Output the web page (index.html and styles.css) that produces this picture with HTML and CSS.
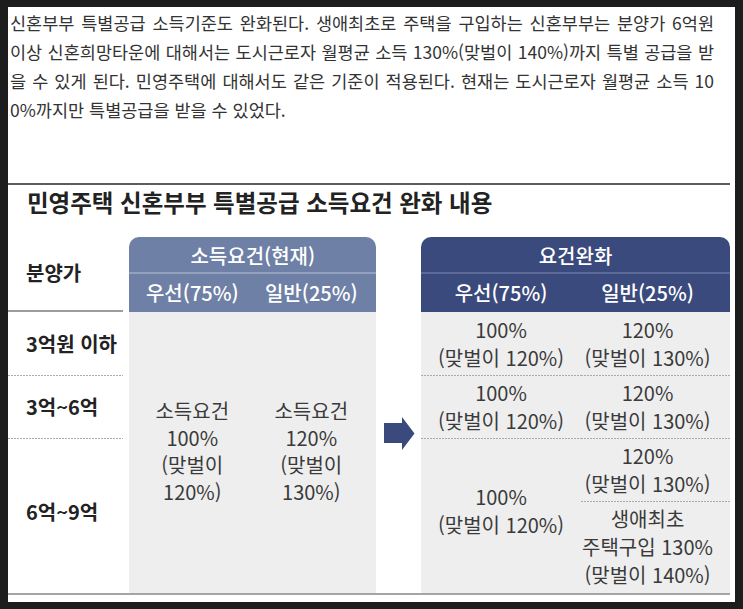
FILE: index.html
```html
<!DOCTYPE html>
<html lang="ko">
<head>
<meta charset="utf-8">
<title>신혼부부 특별공급 소득요건 완화</title>
<link rel="stylesheet" href="styles.css">
</head>
<body>
<div class="page">
  <div class="para">
    <div class="ln">신혼부부 특별공급 소득기준도 완화된다. 생애최초로 주택을 구입하는 신혼부부는 분양가 6억원</div>
    <div class="ln">이상 신혼희망타운에 대해서는 도시근로자 월평균 소득 130%(맞벌이 140%)까지 특별 공급을 받</div>
    <div class="ln">을 수 있게 된다. 민영주택에 대해서도 같은 기준이 적용된다. 현재는 도시근로자 월평균 소득 10</div>
    <div class="ln last">0%까지만 특별공급을 받을 수 있었다.</div>
  </div>
  <section class="info">
    <h2 class="title">민영주택 신혼부부 특별공급 소득요건 완화 내용</h2>
    <div class="table">
      <div class="labels">
        <div class="lab-head">분양가</div>
        <div class="lab r1">3억원 이하</div>
        <div class="lab r2 dt">3억~6억</div>
        <div class="lab r3 dt">6억~9억</div>
      </div>
      <div class="cur">
        <div class="h1 cur-h1">소득요건(현재)</div>
        <div class="h2 cur-h2"><span class="c1">우선(75%)</span><span class="c2">일반(25%)</span></div>
        <div class="cur-body">
          <div class="c1">소득요건<br>100%<br>(맞벌이<br>120%)</div>
          <div class="c2">소득요건<br>120%<br>(맞벌이<br>130%)</div>
        </div>
      </div>
      <div class="arrow-col">
        <svg class="arrow" width="31" height="33" viewBox="0 0 31 33"><polygon points="0,6 18,6 18,0 30.5,16.5 18,33 18,26 0,26" fill="#3b4a7d"/></svg>
      </div>
      <div class="new">
        <div class="h1 new-h1">요건완화</div>
        <div class="h2 new-h2"><span class="c1">우선(75%)</span><span class="c2">일반(25%)</span></div>
        <div class="new-body">
          <div class="cell a1 c1">100%<br>(맞벌이 120%)</div>
          <div class="cell a2 c2">120%<br>(맞벌이 130%)</div>
          <div class="cell b1 c1 dt">100%<br>(맞벌이 120%)</div>
          <div class="cell b2 c2 dt">120%<br>(맞벌이 130%)</div>
          <div class="cell d1 c1 dt">100%<br>(맞벌이 120%)</div>
          <div class="cell d2 c2 dt">120%<br>(맞벌이 130%)</div>
          <div class="cell e2 c2 dt">생애최초<br>주택구입 130%<br>(맞벌이 140%)</div>
        </div>
      </div>
    </div>
  </section>
</div>
</body>
</html>
```
FILE: styles.css
```css
* { box-sizing: border-box; }
body {
  margin: 0;
  background: #1d1d1d;
}
.page {
  margin: 7px 0 0 8px;
  width: 727px;
  height: 595px;
  background: #fff;
  overflow: hidden;
  font-family: "Noto Sans CJK KR", "Noto Sans", sans-serif;
}
.para {
  margin: 1px 0 0 2px;
  width: 704px;
  font-size: 17.5px;
  line-height: 29px;
  color: #333;
}
.ln {
  text-align: justify;
  text-align-last: justify;
}
.ln.last {
  text-align: left;
  text-align-last: left;
}
.info {
  margin-top: 59px;
  width: 722px;
  border-top: 2px solid #5c5c5c;
  border-bottom: 2px solid #a5a5a5;
}
.title {
  margin: 3px 0 0 19px;
  height: 49px;
  font-size: 23.5px;
  line-height: 28px;
  font-weight: 700;
  color: #222;
}
.table {
  display: flex;
  height: 356px;
}
.labels {
  width: 116px;
  display: flex;
  flex-direction: column;
}
.lab-head, .lab {
  display: flex;
  align-items: center;
  padding-left: 18px;
  font-size: 20px;
  font-weight: 700;
  color: #222;
}
.lab-head {
  height: 75px;
  border-bottom: 2px solid #9c9c9c;
  padding-bottom: 2px;
}
.lab.r1, .lab.r2 { height: 63px; }
.lab.r3 { flex: 1; padding-bottom: 9px; }
.dt {
  background-image: linear-gradient(to right, #ababab 0, #ababab 2px, transparent 2px);
  background-size: 3px 1px;
  background-repeat: repeat-x;
  background-position: left top;
}
.h1 {
  height: 37px;
  border-radius: 10px 10px 0 0;
  display: flex;
  align-items: center;
  justify-content: center;
  color: #fff;
  font-size: 20px;
  font-weight: 500;
  padding-top: 2px;
}
.h2 {
  height: 38px;
  display: grid;
  align-items: center;
  color: #fff;
  font-size: 20px;
  font-weight: 500;
  text-align: center;
  padding-bottom: 2px;
}
.cur {
  width: 247px;
  margin-left: 6px;
  display: flex;
  flex-direction: column;
}
.cur-h1 {
  background: #6f80a6;
  border-bottom: 2px solid #93a1bf;
}
.cur-h2 {
  background: #6f80a6;
  grid-template-columns: 122px 125px;
}
.cur-h2 .c1, .cur-body .c1 { padding-left: 4px; }
.cur-h2 .c2, .cur-body .c2 { padding-right: 5px; }
.cur-body {
  flex: 1;
  background: #eeeeee;
  display: grid;
  grid-template-columns: 122px 125px;
  align-items: center;
  text-align: center;
  font-size: 20px;
  line-height: 27px;
  color: #3a3a3a;
  padding-bottom: 3px;
}
.arrow-col {
  width: 45px;
}
.arrow {
  display: block;
  margin: 180px 0 0 8px;
}
.new {
  width: 309px;
  display: flex;
  flex-direction: column;
}
.new-h1 {
  background: #3b4a7d;
  border-bottom: 2px solid #5c6a9a;
}
.new-h2 {
  background: #3b4a7d;
  grid-template-columns: 160px 149px;
}
.new-h2 .c2, .new-body .c2 { padding-right: 16px; }
.new-body {
  flex: 1;
  background: #eeeeee;
  display: grid;
  grid-template-columns: 160px 149px;
  grid-template-rows: 63px 63px 63px 92px;
  font-size: 20px;
  line-height: 28px;
  color: #3a3a3a;
  text-align: center;
}
.cell {
  display: flex;
  align-items: center;
  justify-content: center;
  white-space: nowrap;
}
.a1 { grid-column: 1; grid-row: 1; }
.a2 { grid-column: 2; grid-row: 1; }
.b1 { grid-column: 1; grid-row: 2; }
.b2 { grid-column: 2; grid-row: 2; }
.d1 { grid-column: 1; grid-row: 3 / span 2; padding-bottom: 10px; }
.d2 { grid-column: 2; grid-row: 3; }
.e2 { grid-column: 2; grid-row: 4; }
```
